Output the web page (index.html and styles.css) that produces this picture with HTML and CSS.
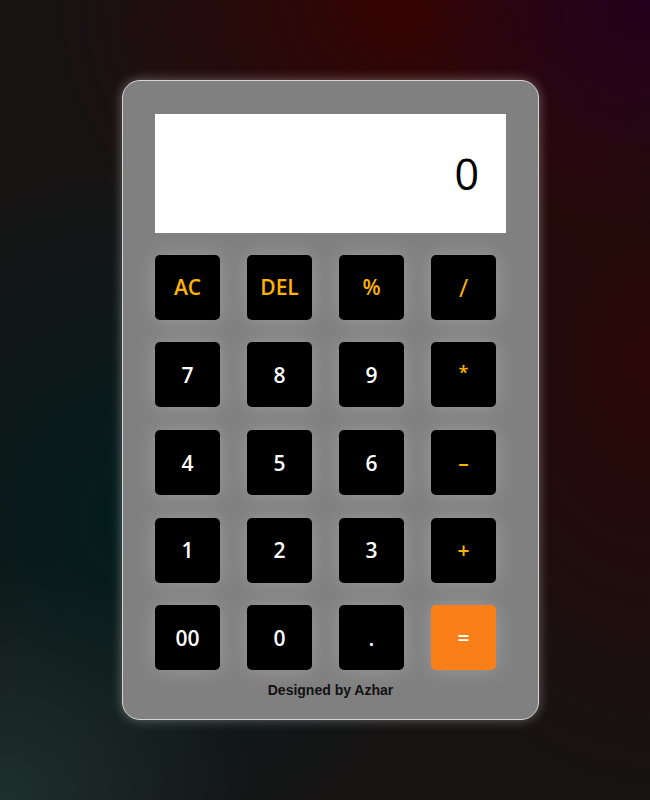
FILE: index.html
```html
<!DOCTYPE html>
<html lang="en">
<head>
<meta charset="UTF-8">
<title>Calculator</title>
<link rel="stylesheet" href="styles.css">
</head>
<body>
  <main class="calculator">
    <div class="display">0</div>
    <div class="keys">
      <button class="key op">AC</button>
      <button class="key op">DEL</button>
      <button class="key op">%</button>
      <button class="key op slash">/</button>
      <button class="key">7</button>
      <button class="key">8</button>
      <button class="key">9</button>
      <button class="key op star">*</button>
      <button class="key">4</button>
      <button class="key">5</button>
      <button class="key">6</button>
      <button class="key op">&#8211;</button>
      <button class="key">1</button>
      <button class="key">2</button>
      <button class="key">3</button>
      <button class="key op">+</button>
      <button class="key">00</button>
      <button class="key">0</button>
      <button class="key">.</button>
      <button class="key equal">=</button>
    </div>
    <p class="credit">Designed by Azhar</p>
  </main>
</body>
</html>
```
FILE: styles.css
```css
* { box-sizing: border-box; }
html, body { margin: 0; height: 100%; }
body {
  min-height: 800px;
  display: flex;
  align-items: center;
  justify-content: center;
  padding-left: 11px;
  background:
    radial-gradient(circle at 100% 0%, #25001d 0, rgba(37,0,29,0) 22%),
    radial-gradient(ellipse 55% 40% at 62% 0%, #360202 0, rgba(54,2,2,0) 100%),
    radial-gradient(ellipse 45% 55% at 100% 45%, #2a0606 0, rgba(42,6,6,0) 100%),
    radial-gradient(ellipse 40% 30% at 0% 100%, #1e302d 0, rgba(30,48,45,0) 100%),
    radial-gradient(ellipse 50% 45% at 20% 65%, #041d1d 0, rgba(4,29,29,0) 100%),
    #161313;
  font-family: "Open Sans", "Noto Sans", sans-serif;
}
.calculator {
  width: 417px;
  padding: 33px 32px 21px;
  background: #808080;
  border: 1px solid #d4d4d4;
  border-radius: 18px;
  box-shadow: 0 0 12px rgba(255,255,255,0.35);
}
.display {
  height: 119px;
  background: #fff;
  display: flex;
  align-items: center;
  justify-content: flex-end;
  padding-right: 27px;
  font-size: 43px;
  font-weight: 500;
  color: #000;
}
.keys {
  margin-top: 22px;
  display: grid;
  grid-template-columns: repeat(4, 65px);
  grid-auto-rows: 65px;
  column-gap: 27px;
  row-gap: 22.7px;
}
.key {
  border: none;
  border-radius: 5px;
  background: #000;
  color: #fff;
  font-family: "Open Sans", "Noto Sans", sans-serif;
  font-size: 21px;
  font-weight: 600;
  box-shadow: 0 0 20px rgba(255,255,255,0.22);
  padding: 0;
}
.key.op { color: #ffb300; }
.key.slash { font-size: 25px; font-weight: 500; }
.key.star { font-size: 18px; padding-bottom: 6px; }
.key.equal { background: #fb7f18; color: #fff; }
.credit {
  margin: 12px 0 0;
  text-align: center;
  font-family: "Liberation Sans", Arial, sans-serif;
  font-weight: bold;
  font-size: 14px;
  color: #111;
}
```
